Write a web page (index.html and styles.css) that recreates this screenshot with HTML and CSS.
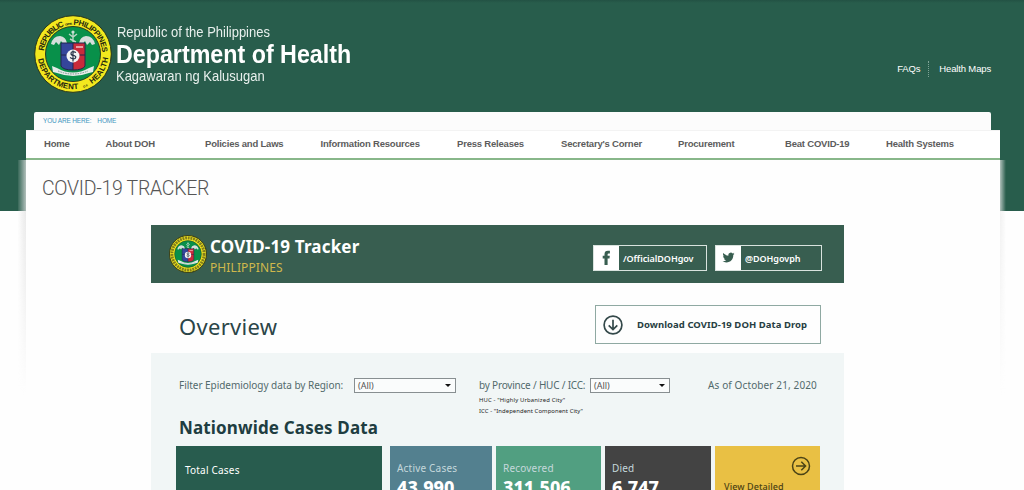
FILE: index.html
```html
<!DOCTYPE html>
<html lang="en">
<head>
<meta charset="utf-8">
<title>COVID-19 Tracker | Department of Health</title>
<link rel="stylesheet" href="styles.css">
</head>
<body>
<div class="page">
  <header class="header">
    <svg class="seal" viewBox="0 0 78 78">
      <defs>
        <path id="arc-top" d="M9.8 39a29.2 29.2 0 0 1 58.4 0"/>
        <path id="arc-bottom" d="M3.7 39a35.3 35.3 0 0 0 70.6 0"/>
        <symbol id="emblem" viewBox="0 0 78 78">
          <circle cx="39" cy="39" r="38.3" fill="#f3e81e" stroke="#26351b" stroke-width="1"/>
          <circle cx="39" cy="39" r="27.5" fill="#08904a" stroke="#2b3c20" stroke-width="1"/>
          <path d="M39 17v10M35 19l4 3 4-3M36 24l6 3" stroke="#b9d5c5" stroke-width="1.4" fill="none"/>
          <circle cx="39" cy="17" r="1.6" fill="#c9dfd5"/>
          <path d="M17 29q2-8 9-8 6 1 7 7l-3 2-3-4-2 4-3-3-2 3zM61 29q-2-8-9-8-6 1-7 7l3 2 3-4 2 4 3-3 2 3z" fill="#d5dedb"/>
          <path d="M27 28h12v27q-10 0-12-4z" fill="#35459b"/>
          <path d="M39 28h12v23q-2 4-12 4z" fill="#c92a3b"/>
          <path d="M27 28h24v23q-2 4-12 4t-12-4zM39 28v27M27 40h24" fill="none" stroke="#24254e" stroke-width="1"/>
          <path d="M42 32h7" stroke="#eec8cb" stroke-width="1.5"/>
          <circle cx="39" cy="41" r="6.5" fill="#f3f3f4"/>
          <path d="M39 35.500v11M42 37.500q-5-2-5 1 0 2 3 2 3 1 1 3-2 1-5-1" fill="none" stroke="#263349" stroke-width="1.2"/>
          <path d="M18 51l5 2q16 9 32 0l5-2-1 6-4 1q-16 6-32 0l-4-1z" fill="#e5ece8"/>
          <path d="M24 56q15 6 30 0" fill="none" stroke="#74928a" stroke-width="1" stroke-dasharray="1.500 1"/>
        </symbol>
      </defs>
      <use href="#emblem"/>
      <g class="seal-text">
        <text><textPath href="#arc-top" startOffset="3" textLength="34">REPUBLIC</textPath></text>
        <text class="seal-small"><textPath href="#arc-top" startOffset="38" textLength="7">OF THE</textPath></text>
        <text><textPath href="#arc-top" startOffset="46" textLength="44">PHILIPPINES</textPath></text>
        <text><textPath href="#arc-bottom" startOffset="5" textLength="56">DEPARTMENT</textPath></text>
        <text class="seal-small"><textPath href="#arc-bottom" startOffset="66" textLength="5">OF</textPath></text>
        <text><textPath href="#arc-bottom" startOffset="75" textLength="32">HEALTH</textPath></text>
      </g>
    </svg>
    <div class="agency">
      <div class="agency-top">Republic of the Philippines</div>
      <div class="agency-name">Department of Health</div>
      <div class="agency-sub">Kagawaran ng Kalusugan</div>
    </div>
    <nav class="quick"><a>FAQs</a><a>Health Maps</a></nav>
  </header>
  <div class="crumbs"><span>YOU ARE HERE:</span><span>HOME</span></div>
  <nav class="menu">
    <a>Home</a><a>About DOH</a><a>Policies and Laws</a><a>Information Resources</a><a>Press Releases</a><a>Secretary's Corner</a><a>Procurement</a><a>Beat COVID-19</a><a>Health Systems</a>
  </nav>
  <main class="content">
    <h1 class="title">COVID-19 TRACKER</h1>
    <section class="dash">
      <div class="banner">
        <svg class="mini-seal" viewBox="0 0 78 78"><use href="#emblem"/><circle cx="39" cy="39" r="33" fill="none" stroke="#5c5a1c" stroke-opacity=".75" stroke-width="6" stroke-dasharray="4 1.500"/><circle cx="39" cy="39" r="38" fill="none" stroke="#39401c" stroke-width="2"/></svg>
        <div class="banner-text">
          <div class="banner-title">COVID-19 Tracker</div>
          <div class="banner-sub">PHILIPPINES</div>
        </div>
        <a class="social fb"><span class="social-icon"><svg width="25" height="24" viewBox="0 0 25 24"><path d="M10.500 19v-6.500H8.700v-2.800h1.800V8.200q0-3.400 3.400-3.400h2v2.800h-1.300q-1 0-1 1v1.100h2.200l-.3 2.800h-1.900V19z" fill="#385e50"/></svg></span><span>/OfficialDOHgov</span></a>
        <a class="social tw"><span class="social-icon"><svg width="25" height="24" viewBox="0 0 25 24"><path transform="translate(6.500 5.500) scale(.5)" d="M23.950 4.570a10 10 0 0 1-2.820.770 4.960 4.960 0 0 0 2.160-2.720c-.95.550-2 .95-3.130 1.180a4.920 4.920 0 0 0-8.380 4.480C7.690 8.100 4.070 6.130 1.640 3.160a4.820 4.820 0 0 0-.67 2.480c0 1.710.87 3.210 2.190 4.100a4.900 4.900 0 0 1-2.230-.62v.060a4.920 4.920 0 0 0 3.950 4.830 5 5 0 0 1-2.210.080 4.940 4.940 0 0 0 4.600 3.420A9.870 9.870 0 0 1 0 19.540a13.990 13.990 0 0 0 7.550 2.210c9.050 0 14-7.500 14-13.990 0-.21 0-.42-.020-.63a9.940 9.940 0 0 0 2.420-2.560z" fill="#385e50"/></svg></span><span>@DOHgovph</span></a>
      </div>
      <div class="overview">
        <h2 class="overview-title">Overview</h2>
        <a class="download">
          <svg width="20" height="20" viewBox="0 0 20 20" fill="none" stroke="#34494a" stroke-width="1.700"><circle cx="10" cy="10" r="8.900"/><path d="M10 4.800v9.700M5.700 10.300l4.300 4.300 4.300-4.300"/></svg>
          <span>Download COVID-19 DOH Data Drop</span>
        </a>
      </div>
      <div class="panel">
        <div class="filters">
          <span class="label region">Filter Epidemiology data by Region:</span>
          <span class="select select-region">(All)</span>
          <div class="province">
            <span class="label prov">by Province / HUC / ICC:</span>
            <div class="note">HUC - "Highly Urbanized City"</div>
            <div class="note">ICC - "Independent Component City"</div>
          </div>
          <span class="select select-prov">(All)</span>
          <span class="label asof">As of October 21, 2020</span>
        </div>
        <h3 class="cases-title">Nationwide Cases Data</h3>
        <div class="cards">
          <div class="card total"><div class="card-label">Total Cases</div></div>
          <div class="card active"><div class="card-label">Active Cases</div><div class="num">43,990</div></div>
          <div class="card recovered"><div class="card-label">Recovered</div><div class="num">311,506</div></div>
          <div class="card died"><div class="card-label">Died</div><div class="num">6,747</div></div>
          <div class="card detail">
            <svg width="20" height="20" viewBox="0 0 20 20" fill="none" stroke="#4b4316" stroke-width="1.500"><circle cx="10" cy="10" r="8.500"/><path d="M5 10h9.500M10.300 5.700l4.300 4.300-4.300 4.300"/></svg>
            <div class="detail-label">View Detailed</div>
          </div>
        </div>
      </div>
    </section>
  </main>
</div>
</body>
</html>
```
FILE: styles.css
```css
* { box-sizing: border-box; }
body { margin: 0; height: 490px; overflow: hidden; background: #fefefe linear-gradient(#235244 0, #285d4c 3px, #285d4c 211px, #fefefe 211px) no-repeat; font-family: "Liberation Sans", Arial, sans-serif; }
.page { height: 490px; white-space: nowrap; }
h1, h2, h3 { margin: 0; font-weight: 400; }

.header { display: flex; height: 112px; padding: 15px 33px 0 34px; }
.seal { width: 78px; height: 78px; flex: none; }
.seal-text { font: bold 7.9px "Liberation Sans", Arial, sans-serif; fill: #26290f; }
.seal-small { font-size: 3px; }
.agency { width: 300px; margin-left: 5px; color: #fff; }
.agency > div { transform-origin: 0 0; width: max-content; }
.agency-top { margin-top: 8px; font-size: 15px; line-height: 18px; transform: scaleX(.865); color: #e8f0ed; }
.agency-name { margin-left: -1px; font-size: 25.500px; font-weight: 700; line-height: 26px; transform: scaleX(.912); }
.agency-sub { margin-left: -1px; font-size: 15px; line-height: 17px; transform: scaleX(.865); color: #e8f0ed; }
.quick { display: flex; height: 16px; margin: 46px 0 0 auto; font-size: 9.500px; letter-spacing: -.15px; line-height: 16px; color: #fff; }
.quick a + a { margin-left: 8px; padding-left: 10px; border-left: 1px dotted #7fa497; }

.crumbs { display: flex; gap: 6px; height: 18px; margin: 0 33px 0 34px; padding-left: 9px; background: #fcfcfc; border-radius: 2px 2px 0 0; font-size: 6.500px; letter-spacing: -.17px; line-height: 17px; color: #4297c0; }
.menu { display: grid; grid-template-columns: 61.500px 99.500px 115.500px 136.500px 104px 117px 107px 101px auto; height: 30px; margin: 0 24px 0 26px; padding-left: 18px; background: #fff; border-top: 1px solid #f3f3f3; border-bottom: 2px solid #88b78a; font-size: 9.500px; font-weight: 700; letter-spacing: -.2px; line-height: 26px; color: #5c5c5c; }

.content { position: relative; height: 330px; margin: 0 24px 0 26px; padding: 15px 0 0; background: #fefefe; }
.content::before, .content::after { content: ""; position: absolute; top: 0; width: 8px; height: 235px; -webkit-mask-image: linear-gradient(#000 20%, transparent); mask-image: linear-gradient(#000 20%, transparent); }
.content::before { left: -8px; background: linear-gradient(to left, rgba(225,225,225,.75), rgba(240,240,240,.08)); }
.content::after { right: -6px; width: 6px; background: linear-gradient(to right, rgba(235,235,235,.7), rgba(245,245,245,0)); }
.title { padding-left: 16px; height: 50px; font: 300 19.500px/27px Roboto, sans-serif; color: #555; letter-spacing: -.3px; }

.dash { width: 693px; margin-left: 125px; font-family: "Noto Sans", sans-serif; }
.banner { display: flex; height: 58px; padding: 0 23px 0 18px; background: #385e50; color: #fff; }
.mini-seal { width: 38px; height: 38px; margin-top: 10px; flex: none; }
.banner-text { margin-left: 3px; width: 180px; }
.banner-title { margin-top: 9px; font-size: 17px; font-weight: 700; line-height: 25px; letter-spacing: .17px; }
.banner-sub { font-size: 12px; line-height: 17px; letter-spacing: .1px; color: #cfb84c; }
.social { display: flex; height: 26px; margin-top: 20px; border: 1px solid #d9e3de; font-size: 9px; font-weight: 600; line-height: 25px; letter-spacing: -.05px; }
.social-icon { width: 25px; height: 24px; margin-right: 4px; background: #fff; }
.social-icon svg { display: block; }
.fb { width: 114px; margin-left: auto; }
.tw { width: 107px; margin-left: 8px; }
.banner .tw { margin-right: -1px; }

.overview { display: flex; justify-content: space-between; height: 70px; padding: 22px 23px 0 28px; }
.overview-title { font-size: 22px; line-height: 43px; color: #2b4548; letter-spacing: .3px; }
.download { display: flex; align-items: center; width: 226px; height: 39px; padding-left: 7px; gap: 14px; border: 1px solid #8fa9a2; font-size: 9.500px; font-weight: 700; letter-spacing: .05px; color: #283f43; }

.panel { height: 137px; padding: 25px 24px 0 25px; background: #f1f6f6; }
.filters { display: flex; height: 37px; padding-left: 3px; color: #526a6c; }
.label { font-size: 10px; line-height: 15px; }
.region { width: 175px; letter-spacing: -.04px; }
.select { position: relative; height: 15px; padding-left: 3px; border: 1px solid #888f91; background: #fafcfc; font-size: 9px; line-height: 13px; color: #555; }
.select::after { content: ""; position: absolute; right: 4px; top: 5px; border: 3px solid transparent; border-top-color: #111; border-bottom: 0; }
.select-region { width: 102px; margin-right: 23px; }
.select-prov { width: 80px; }
.province { width: 111px; }
.prov { display: block; letter-spacing: -.2px; }
.note { font-size: 5.900px; line-height: 11px; letter-spacing: .08px; color: #222; }
.note:nth-child(2) { margin-top: 2px; letter-spacing: .15px; }
.asof { margin-left: 38px; letter-spacing: .12px; }
.cases-title { padding-left: 3px; height: 31px; font-size: 17px; font-weight: 700; line-height: 25px; letter-spacing: .15px; color: #203d41; }
.cards { display: grid; grid-template-columns: 206px 102px 106px 106px 105px; column-gap: 4px; height: 44px; }
.cards { grid-template-columns: 210px 102px 105px 106px 105px; }
.card { height: 44px; padding: 15px 0 0 7px; color: #fff; }
.card-label { font-size: 10px; line-height: 14px; letter-spacing: .2px; color: #c5d8dc; }
.num { font-size: 18px; font-weight: 800; line-height: 25px; }
.total { width: 206px; background: #285c4e; padding: 17px 0 0 9px; }
.total .card-label { color: #fff; }
.active { background: #53808f; }
.recovered { background: #519f81; }
.died { background: #434343; }
.detail { background: #e9c044; padding: 10px 9px 0; }
.detail svg { display: block; margin-left: auto; }
.detail-label { margin-top: 4px; font-size: 9px; line-height: 13px; font-weight: 500; letter-spacing: .1px; color: #4c4215; }
```
